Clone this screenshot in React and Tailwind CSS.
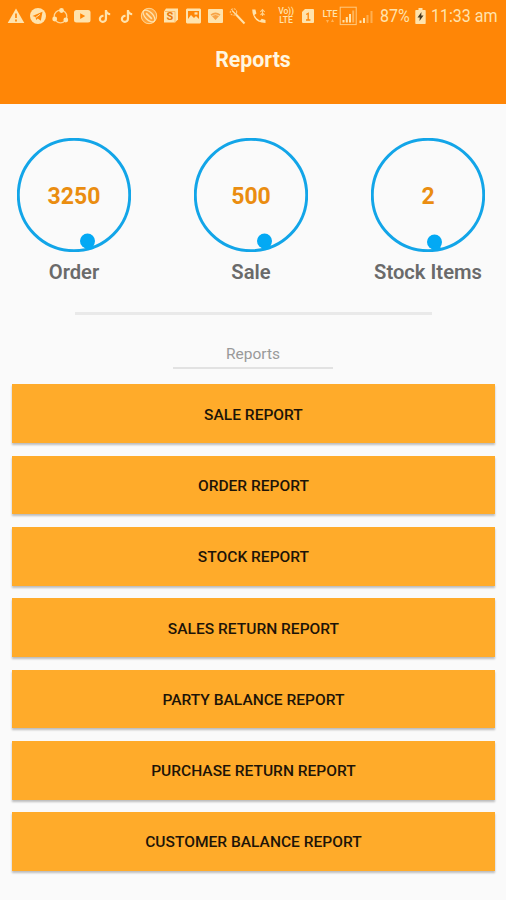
import { FaTiktok } from 'react-icons/fa6';

const stats = [
  { label: 'Order', value: 3250, dot: { x: 70.5, y: 103 } },
  { label: 'Sale', value: 500, dot: { x: 70.5, y: 103 } },
  { label: 'Stock Items', value: 2, dot: { x: 63.5, y: 104 } },
];

const reports = [
  'Sale Report',
  'Order Report',
  'Stock Report',
  'Sales Return Report',
  'Party Balance Report',
  'Purchase Return Report',
  'Customer Balance Report',
];

function Icon({ children }) {
  return (
    <svg viewBox="0 0 18 18" className="h-[18px] w-[18px]" fill="currentColor">
      {children}
    </svg>
  );
}

function NotificationIcons() {
  return (
    <div className="grid w-[265px] grid-cols-12 place-items-center">
      {/* Warning */}
      <Icon>
        <path d="M9 1.5 17.3 16H.7Z" />
        <path d="M9 6.5v4.5M9 12.5v2" stroke="#ff8606" strokeWidth="1.7" />
      </Icon>
      {/* Telegram */}
      <Icon>
        <circle cx="9" cy="9" r="8" />
        <path d="m3.5 9 10-4.3-1.7 9-3-2.3-1.7 1.7-.5-3Z" fill="#ff8606" />
        <path d="m7 10.3 4-3" stroke="#ffe3ad" strokeWidth="1" />
      </Icon>
      {/* Share */}
      <Icon>
        <circle cx="9.5" cy="9.5" r="6.3" fill="none" stroke="currentColor" strokeWidth="1.3" opacity=".85" />
        <circle cx="10.5" cy="3.5" r="2.4" />
        <circle cx="3.7" cy="12" r="2.4" />
        <circle cx="14.8" cy="13" r="2.4" />
      </Icon>
      {/* Video */}
      <Icon>
        <rect x="1" y="3" width="16.5" height="12.5" rx="2.5" />
        <path d="m7.2 6.2 5 2.9-5 2.9Z" fill="#ff8606" />
      </Icon>
      <FaTiktok className="ml-px h-[13px] w-[13px]" />
      <FaTiktok className="ml-px h-[13px] w-[13px]" />
      {/* Cleaner */}
      <Icon>
        <circle cx="9" cy="9" r="8" opacity=".3" />
        <g transform="rotate(45 9 9)" fill="none" stroke="currentColor">
          <ellipse cx="9" cy="9" rx="7.5" ry="3.8" strokeWidth="1.3" />
          <path d="M5 9h8" strokeWidth="1.6" />
        </g>
        <circle cx="9" cy="9" r="7.7" fill="none" stroke="currentColor" strokeWidth=".8" />
      </Icon>
      {/* Letter badge */}
      <Icon>
        <path d="M4 1.5h12v11l-3 3H2v-11Z" />
        <path d="M3 4.5h10v11" fill="none" stroke="#ffb252" strokeWidth=".8" />
        <text x="8" y="13.2" textAnchor="middle" fontSize="11" fontWeight="700" fill="#e87a0c" className="font-['Roboto',sans-serif]">S</text>
      </Icon>
      {/* Picture */}
      <Icon>
        <path fillRule="evenodd" d="M3 1.5h13l1 1v13l-1 1H3l-1-1v-13ZM4 4v8l3-4 3 3 2-2 3 3V4Z" />
        <rect x="10.5" y="5.3" width="3" height="2.3" />
      </Icon>
      {/* Wifi tile */}
      <Icon>
        <rect x="2" y="2" width="15" height="14" rx="1" />
        <path d="M4.5 7.4q5-3.8 10 0l-5 5.6Z" fill="#f7a447" />
        <path d="M5.8 8.8q3.7-2.5 7.4 0" fill="none" stroke="#ffe3ad" strokeWidth=".7" />
      </Icon>
      {/* Wand */}
      <Icon>
        <path d="M8 7.5 16.5 16.5" stroke="currentColor" strokeWidth="2" />
        <circle cx="5.5" cy="5" r="3.2" fill="none" stroke="currentColor" strokeWidth="1.1" strokeDasharray="2 1" opacity=".75" />
        <path d="m4 3.5 4 4" stroke="currentColor" strokeWidth="1.2" />
      </Icon>
      {/* Wifi call */}
      <Icon>
        <path d="M2.2 2.5h3.2l1 4-2 1.5q1.6 4 5.6 5.8l1.7-2.1 3.8 1.2v3.2Q2.7 15.5 2.2 2.5Z" />
        <path d="M12.5 9V3M10.3 5l2.2-2.4L14.7 5M10.5 8l2-2 2 2" fill="none" stroke="currentColor" strokeWidth="1.1" opacity=".8" />
      </Icon>
    </div>
  );
}

function StatusBar() {
  return (
    <div className="flex h-8 items-center overflow-hidden pl-[5px] text-[#ffe3ad]">
      <NotificationIcons />
      <div className="ml-[7px] w-[18px] text-center text-[8.6px] leading-[9px] font-medium">
        <p className="tracking-tight">Vo))</p>
        <p>LTE</p>
      </div>
      {/* SIM */}
      <svg viewBox="0 0 14 16" className="ml-[6px] h-4 w-[14px]" fill="currentColor">
        <path d="M4 1h8q1 0 1 1v12q0 1-1 1H2q-1 0-1-1V4Z" />
        <path d="m5.2 6.5 2-1.2V12M5 12h4.4" fill="none" stroke="#ff8606" strokeWidth="1.3" />
      </svg>
      <div className="ml-[6px] flex w-[18px] flex-col items-center text-[9.5px] leading-[9px] font-medium">
        <p>LTE</p>
        {/* Data activity */}
        <svg viewBox="0 0 8 6" className="h-[6px] w-2 opacity-50" fill="currentColor">
          <path d="M0 2h3L1.5 5ZM5 4h3L6.5 1Z" />
        </svg>
      </div>
      {/* Signal strength, both SIMs */}
      <svg viewBox="0 0 36 20" className="h-5 w-9" fill="currentColor">
        <rect x="1.2" y="1.2" width="16" height="17.4" fill="none" stroke="currentColor" opacity=".75" />
        <path d="M3.5 14h2v2.5h-2ZM6.8 11h2v5.5h-2ZM10 8h2v8.5h-2Z" />
        <path d="M13.2 4.5h2v12h-2Z" opacity=".5" />
        <path d="M20.5 14.5h2v2.5h-2ZM24 12h2v5h-2Z" />
        <path d="M27.5 9h2v8h-2ZM31.5 5h2v12h-2Z" opacity=".45" />
      </svg>
      <span className="ml-[5px] w-[30px] origin-left scale-x-[0.87] text-[18.4px] leading-5 whitespace-nowrap">87%</span>
      {/* Battery */}
      <svg viewBox="0 0 11 16" className="ml-[5px] h-4 w-[11px]" fill="currentColor">
        <path d="M3.5 0h4v2H10q.7 0 .7.7v12.5q0 .7-.7.7H1q-.7 0-.7-.7V2.7Q.3 2 1 2h2.5Z" />
        <path d="M6.5 4 2.5 9.5h2.3L4.5 13l4-5.5H6.2Z" fill="#493a20" />
      </svg>
      <span className="ml-[5px] w-[66px] origin-left scale-x-[0.87] text-[18.4px] leading-5 whitespace-nowrap">11:33 am</span>
    </div>
  );
}

function StatCircle({ label, value, dot }) {
  return (
    <div className="flex w-[114px] flex-col items-center">
      <div className="grid h-[114px] w-[114px] place-items-center">
        <svg viewBox="0 0 114 114" className="col-start-1 row-start-1 h-full w-full">
          <circle cx="57" cy="57" r="55.7" fill="none" stroke="#12a5e8" strokeWidth="2.9" />
          <circle cx={dot.x} cy={dot.y} r="7.5" fill="#03a9f4" />
          <path d={`M${dot.x - 4} ${dot.y + 5}L${dot.x} 112L${dot.x + 6} ${dot.y + 8}V${dot.y + 3}Z`} fill="#03a9f4" />
        </svg>
        <span className="col-start-1 row-start-1 pt-[5px] text-[23px] font-bold text-[#ea8d10]">{value}</span>
      </div>
      <p className="mt-[8px] text-[20.2px] leading-6 font-semibold whitespace-nowrap text-[#6a6a6a]">{label}</p>
    </div>
  );
}

function App() {
  return (
    <div className="h-[900px] w-[506px] overflow-hidden bg-[#fafafa] font-['Roboto',sans-serif]">
      <header className="h-[104px] bg-[#ff8606]">
        <StatusBar />
        <h1 className="pt-[14px] text-center text-[21.3px] leading-7 font-bold text-[#fff6e0]">Reports</h1>
      </header>

      <section className="flex justify-between pt-[34px] pr-[21px] pl-[17px]">
        {stats.map((stat) => (
          <StatCircle key={stat.label} {...stat} />
        ))}
      </section>

      <div className="mt-[28px] ml-[75px] h-[3px] w-[357px] bg-[#e9e9e9]" />

      <h2 className="mx-auto mt-[30px] h-[24px] w-[160px] border-b-2 border-[#e2e2e2] text-center text-[15.5px] leading-[18px] text-[#999]">
        Reports
      </h2>

      <div className="mt-[15.4px] flex flex-col gap-[12.5px] pr-[11.5px] pl-[12.4px]">
        {reports.map((report) => (
          <button
            key={report}
            type="button"
            className="h-[58.8px] bg-[#ffab2a] pt-[3px] text-[15.55px] font-medium text-[#1d1408] uppercase shadow-[0_2px_2px_rgba(0,0,0,0.25)]"
          >
            {report}
          </button>
        ))}
      </div>
    </div>
  );
}

export default App;
